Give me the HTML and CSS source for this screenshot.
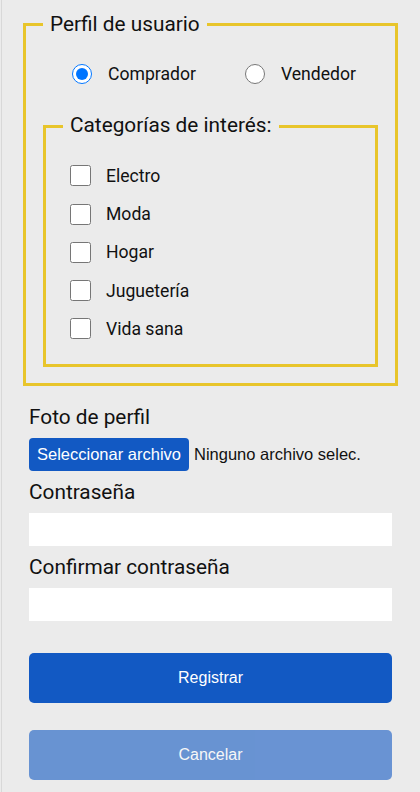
FILE: index.html
```html
<!DOCTYPE html>
<html lang="es">
<head>
<meta charset="utf-8">
<title>Registro</title>
<link rel="stylesheet" href="styles.css">
</head>
<body>
<form class="form">
  <fieldset class="box">
    <legend class="box-title">Perfil de usuario</legend>
    <div class="radios">
      <label class="opt"><input class="radio" type="radio" name="tipo" checked><span>Comprador</span></label>
      <label class="opt"><input class="radio" type="radio" name="tipo"><span>Vendedor</span></label>
    </div>
    <fieldset class="box inner">
      <legend class="box-title">Categorías de interés:</legend>
      <div class="checks">
        <label class="opt check"><input class="checkbox" type="checkbox"><span>Electro</span></label>
        <label class="opt check"><input class="checkbox" type="checkbox"><span>Moda</span></label>
        <label class="opt check"><input class="checkbox" type="checkbox"><span>Hogar</span></label>
        <label class="opt check"><input class="checkbox" type="checkbox"><span>Juguetería</span></label>
        <label class="opt check"><input class="checkbox" type="checkbox"><span>Vida sana</span></label>
      </div>
    </fieldset>
  </fieldset>

  <div class="fields">
    <div class="field">
      <label class="field-label">Foto de perfil</label>
      <div class="file"><span class="file-btn">Seleccionar archivo</span><span class="file-name">Ninguno archivo selec.</span></div>
    </div>
    <div class="field">
      <label class="field-label" for="pw">Contraseña</label>
      <input class="text-input" id="pw" type="password">
    </div>
    <div class="field">
      <label class="field-label" for="pw2">Confirmar contraseña</label>
      <input class="text-input" id="pw2" type="password">
    </div>
  </div>

  <div class="actions">
    <button class="btn" type="submit">Registrar</button>
    <button class="btn btn-cancel" type="button" disabled>Cancelar</button>
  </div>
</form>
</body>
</html>
```
FILE: styles.css
```css
html {
  background: #ebebeb;
}
body {
  margin: 0 0 0 1px;
  border-left: 1px solid #d8d8d8;
  min-height: 100vh;
  box-sizing: border-box;
  font-family: Roboto, "Liberation Sans", Arial, sans-serif;
  color: #111;
}
.form {
  padding: 13px 28px 0 27px;
}
.box {
  margin: 0 -6px;
  border: 3px solid #e8c52b;
  padding: 0 17px 16px;
  min-width: 0;
}
.box-title {
  padding: 0 7px;
  font-size: 20.8px;
  line-height: 23.4px;
}
.radios {
  display: flex;
  padding: 27px 0 0 29px;
  gap: 49px;
}
.opt {
  display: flex;
  align-items: center;
  gap: 16px;
  height: 22px;
  font-size: 17.6px;
}
.radio {
  width: 20px;
  height: 20px;
  margin: 0;
  accent-color: #0075ff;
}
.inner {
  margin: 29px 0 0;
  padding: 0 17px 24px;
}
.checks {
  display: flex;
  flex-direction: column;
  gap: 16.25px;
  padding: 27px 0 0 7px;
}
.check {
  gap: 15px;
}
.checkbox {
  width: 21px;
  height: 21px;
  margin: 0;
}
.fields {
  display: flex;
  flex-direction: column;
  gap: 9px;
  margin-top: 19.5px;
}
.field {
  display: flex;
  flex-direction: column;
  gap: 9px;
}
.field-label {
  font-size: 20.8px;
  line-height: 24px;
}
.file {
  display: flex;
  align-items: center;
  gap: 5px;
  font-family: "Liberation Sans", Arial, sans-serif;
  font-size: 16.5px;
}
.file-btn {
  background: #1259c3;
  color: #fff;
  border-radius: 4px;
  height: 33px;
  padding: 0 8px;
  display: flex;
  align-items: center;
}
.file-name {
  color: #111;
}
.text-input {
  height: 33px;
  border: none;
  margin: 0;
  padding: 0 8px;
  background: #fff;
  box-sizing: border-box;
  width: 100%;
}
.actions {
  display: flex;
  flex-direction: column;
  gap: 27px;
  margin-top: 32px;
}
.btn {
  height: 50px;
  border: none;
  border-radius: 5px;
  background: #1259c3;
  color: #fff;
  font-family: "Liberation Sans", Arial, sans-serif;
  font-size: 16px;
  width: 100%;
}
.btn-cancel {
  opacity: 0.6;
}
```
